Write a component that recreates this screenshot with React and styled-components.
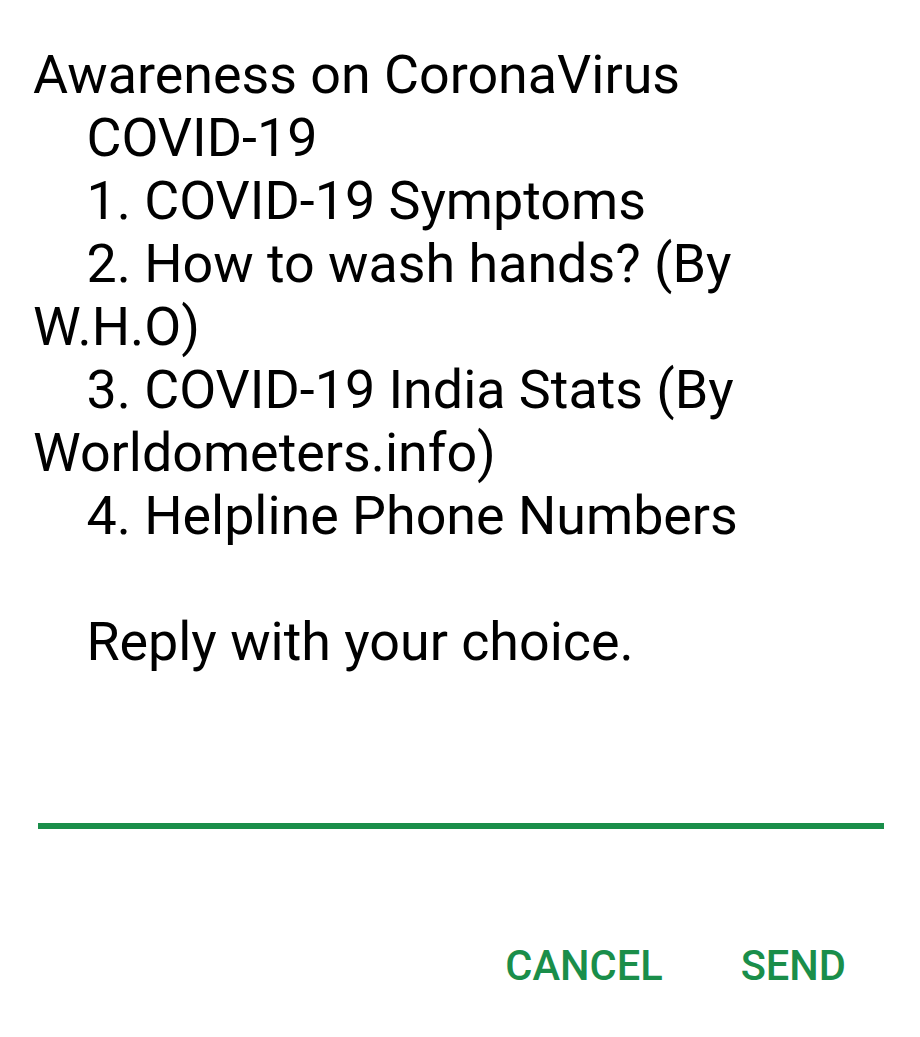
import React from 'react';
import styled, { createGlobalStyle } from 'styled-components';

const GlobalStyle = createGlobalStyle`
  html, body {
    margin: 0;
    padding: 0;
    background: #ffffff;
  }
  body {
    font-family: Roboto, "Noto Sans", sans-serif;
  }
`;

const Dialog = styled.div`
  width: 920px;
  height: 1037px;
  background: #ffffff;
  box-sizing: border-box;
  padding: 43px 0 0 0;
  display: flex;
  flex-direction: column;
`;

const Message = styled.div`
  margin: 0 0 0 33px;
  width: 730px;
  font-size: 53.8px;
  line-height: 63px;
  color: #000000;
  white-space: pre-wrap;
`;

const InputLine = styled.div`
  margin: 150px 36px 0 38px;
  height: 6px;
  background: #1a8e4a;
`;

const Actions = styled.div`
  display: flex;
  justify-content: flex-end;
  gap: 78px;
  padding: 111px 74px 0 0;
`;

const ActionButton = styled.button`
  background: none;
  border: none;
  padding: 0;
  font-family: Roboto, "Noto Sans", sans-serif;
  font-weight: 500;
  font-size: 41.6px;
  line-height: 52px;
  color: #1a8e4a;
  text-transform: uppercase;
  cursor: pointer;
`;

const text = `Awareness on CoronaVirus
    COVID-19
    1. COVID-19 Symptoms
    2. How to wash hands? (By W.H.O)
    3. COVID-19 India Stats (By Worldometers.info)
    4. Helpline Phone Numbers

    Reply with your choice.`;

export default function App() {
  return (
    <>
      <GlobalStyle />
      <Dialog>
        <Message>{text}</Message>
        <InputLine />
        <Actions>
          <ActionButton>Cancel</ActionButton>
          <ActionButton>Send</ActionButton>
        </Actions>
      </Dialog>
    </>
  );
}
